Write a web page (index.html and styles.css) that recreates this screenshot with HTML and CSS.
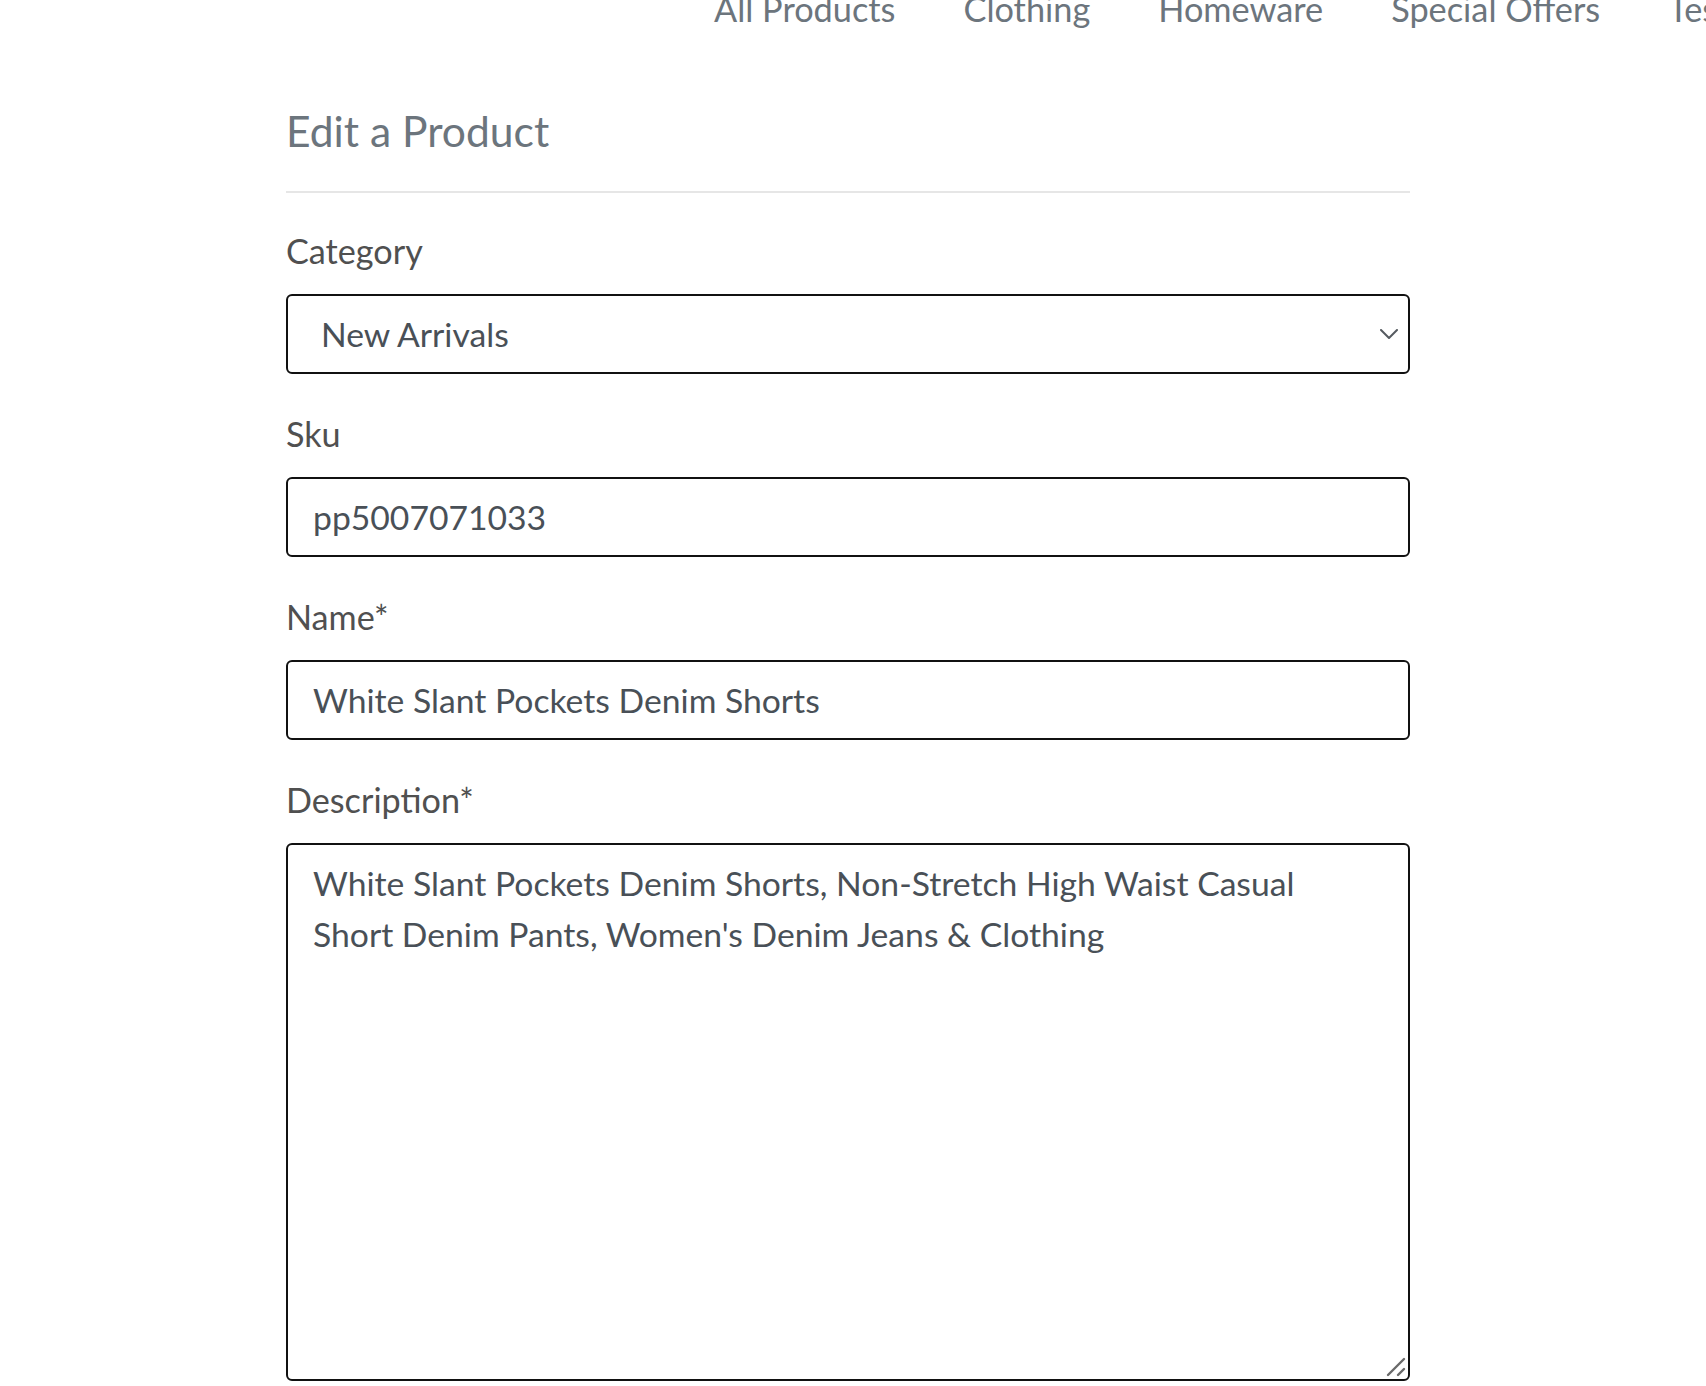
FILE: index.html
```html
<!DOCTYPE html>
<html lang="en">
<head>
<meta charset="utf-8">
<title>Edit a Product</title>
<link rel="stylesheet" href="styles.css">
</head>
<body>
<header class="topnav">
  <nav class="nav-links">
    <a class="nav-link" href="#">All Products</a>
    <a class="nav-link" href="#">Clothing</a>
    <a class="nav-link" href="#">Homeware</a>
    <a class="nav-link" href="#">Special Offers</a>
    <a class="nav-link" href="#">Test</a>
  </nav>
</header>
<main class="page">
  <h2 class="page-title">Edit a Product</h2>
  <hr class="divider">
  <form class="product-form">
    <div class="form-group">
      <label class="form-label" for="category">Category</label>
      <div class="field-wrap">
        <select class="form-control form-select" id="category">
          <option>New Arrivals</option>
          <option>Clothing</option>
          <option>Homeware</option>
          <option>Special Offers</option>
        </select>
        <svg class="select-chevron" width="18" height="10" viewBox="0 0 18 10" aria-hidden="true">
          <path d="M1 1 L9 9 L17 1" fill="none" stroke="#555a60" stroke-width="2" stroke-linecap="round" stroke-linejoin="round"/>
        </svg>
      </div>
    </div>
    <div class="form-group">
      <label class="form-label" for="sku">Sku</label>
      <input class="form-control" id="sku" type="text" value="pp5007071033">
    </div>
    <div class="form-group">
      <label class="form-label" for="name">Name*</label>
      <input class="form-control" id="name" type="text" value="White Slant Pockets Denim Shorts">
    </div>
    <div class="form-group">
      <label class="form-label" for="description">Description*</label>
      <div class="field-wrap">
        <textarea class="form-control form-textarea" id="description">White Slant Pockets Denim Shorts, Non-Stretch High Waist Casual Short Denim Pants, Women's Denim Jeans &amp; Clothing</textarea>
        <svg class="resize-grip" width="20" height="20" viewBox="0 0 20 20" aria-hidden="true">
          <path d="M2 18 L18 2" stroke="#6a6a6a" stroke-width="2.4" stroke-linecap="round"/>
          <path d="M12 18 L18 12" stroke="#6a6a6a" stroke-width="2.4" stroke-linecap="round"/>
        </svg>
      </div>
    </div>
  </form>
</main>
</body>
</html>
```

FILE: styles.css
```css
html, body {
  margin: 0;
  padding: 0;
  background: #ffffff;
}

body {
  font-family: Lato, "Open Sans", "Liberation Sans", sans-serif;
  font-size: 34px;
  line-height: 1.5;
  color: #4f4f4f;
}

.topnav {
  margin-top: -17px;
  overflow: hidden;
  white-space: nowrap;
}

.nav-links {
  display: flex;
  padding-left: 680px;
}

.nav-link {
  display: block;
  padding: 0 34px;
  color: #6c757d;
  text-decoration: none;
  font-size: 34.3px;
  line-height: 51px;
  flex: none;
}

.page {
  margin-left: 286px;
  width: 1124px;
}

.page-title {
  margin: 71px 0 0 0;
  font-size: 42.6px;
  font-weight: 400;
  line-height: 1.2;
  color: #6c757d;
}

.divider {
  margin: 35px 0 0 0;
  border: 0;
  border-top: 2px solid #e6e6e6;
  height: 0;
}

.product-form {
  padding-top: 32px;
}

.form-group {
  margin-bottom: 34px;
}

.form-label {
  display: block;
  margin-bottom: 18px;
  font-size: 34.2px;
  line-height: 51px;
  color: #505050;
}

.form-control {
  display: block;
  box-sizing: border-box;
  width: 100%;
  height: 80px;
  margin: 0;
  padding: 12.5px 25px;
  font-family: Lato, "Open Sans", "Liberation Sans", sans-serif;
  font-size: 33.7px;
  line-height: 51px;
  color: #495057;
  background: #ffffff;
  border: 2px solid #111111;
  border-radius: 6px;
  outline: none;
}

.field-wrap {
  position: relative;
}

.form-select {
  appearance: none;
  -webkit-appearance: none;
  padding-left: 33px;
  padding-right: 60px;
}

.select-chevron {
  position: absolute;
  right: 12px;
  top: 35px;
  pointer-events: none;
}

.form-textarea {
  height: 538px;
  resize: none;
}

.resize-grip {
  position: absolute;
  right: 4px;
  bottom: 4px;
  pointer-events: none;
}
```
